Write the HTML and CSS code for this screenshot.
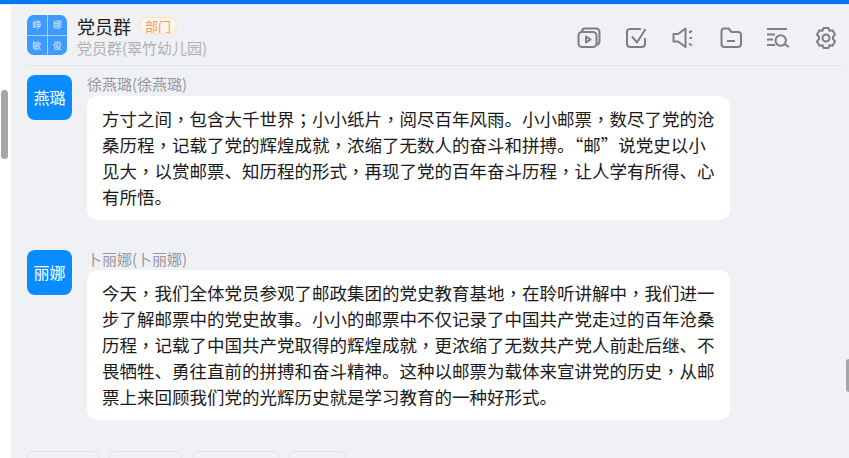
FILE: index.html
```html
<!DOCTYPE html>
<html lang="zh-CN">
<head>
    <meta charset="UTF-8">
    <title>党员群</title>
    <link rel="stylesheet" href="styles.css">
</head>
<body>

    <!-- Top Accent -->
    <div class="top-line"></div>

    <div class="page">

        <!-- Left Strip -->
        <div class="side-strip"><div class="thumb-left"></div></div>

        <!-- Chat Panel -->
        <div class="chat">
            <div class="thumb-right"></div>

            <header class="chat-head">
                <div class="group-logo">
                    <span>峥</span><span>娜</span><span>敏</span><span>俊</span>
                </div>
                <div class="group-info">
                    <div class="group-title">
                        <span class="group-name">党员群</span>
                        <span class="group-tag">部门</span>
                    </div>
                    <div class="group-sub">党员群(翠竹幼儿园)</div>
                </div>
                <div class="head-tools">
                    <svg class="tool" viewBox="0 0 24 24"><path d="M5 5.500C5 3.500 6 2.500 8 2.500H19A3.500 3.500 0 0 1 22.500 6V15A4 4 0 0 1 19.500 19"/><rect x="1.500" y="6" width="18" height="15" rx="3.500"/><path d="M9 10.500V16.500L13.500 13.500Z"/></svg>
                    <svg class="tool" viewBox="0 0 24 24"><path d="M17 3H6A3 3 0 0 0 3 6V18A3 3 0 0 0 6 21H18A3 3 0 0 0 21 18V12"/><path d="M8 10.500L13 16.500L21.500 3"/></svg>
                    <svg class="tool" viewBox="0 0 24 24"><path d="M2.500 8H7L14.500 2.500V21L7 15.500H2.500Z"/><path d="M18 6.500L21 5M18.500 12H21M18 17.500L21 19.500"/></svg>
                    <svg class="tool" viewBox="0 0 24 24"><path d="M2.500 5A2.500 2.500 0 0 1 5 2.500H9.500L12.500 6H19A3 3 0 0 1 22 9V18A3 3 0 0 1 19 21H5.500A3 3 0 0 1 2.500 18Z"/><path d="M8 15H16"/></svg>
                    <svg class="tool" viewBox="0 0 24 24"><path d="M1 3H21M1 8.500H9M1 13.500H7M1 19H9"/><circle cx="14.700" cy="14.500" r="5.200"/><path d="M18.500 18.200L23 21"/></svg>
                    <svg class="tool" viewBox="0 0 24 24"><path d="M9.500 2H14.500L15.500 4.800L18.500 4.200L21 8.500L19 10.800V13.200L21 15.500L18.500 19.800L15.500 19.200L14.500 22H9.500L8.500 19.200L5.500 19.800L3 15.500L5 13.200V10.800L3 8.500L5.500 4.200L8.500 4.800Z"/><circle cx="12" cy="12" r="3.500"/></svg>
                </div>
            </header>

            <!-- Messages -->
            <div class="msg first">
                <div class="avatar">燕璐</div>
                <div class="msg-body">
                    <div class="msg-name">徐燕璐(徐燕璐)</div>
                    <div class="bubble">方寸之间<i lang="zh-TW">，</i>包含大千世界<i lang="zh-TW">；</i>小小纸片<i lang="zh-TW">，</i>阅尽百年风雨。小小邮票<i lang="zh-TW">，</i>数尽了党的沧<br>桑历程<i lang="zh-TW">，</i>记载了党的辉煌成就<i lang="zh-TW">，</i>浓缩了无数人的奋斗和拼搏。“邮”说党史以小<br>见大<i lang="zh-TW">，</i>以赏邮票、知历程的形式<i lang="zh-TW">，</i>再现了党的百年奋斗历程<i lang="zh-TW">，</i>让人学有所得、心<br>有所悟。</div>
                </div>
            </div>

            <div class="msg">
                <div class="avatar">丽娜</div>
                <div class="msg-body">
                    <div class="msg-name">卜丽娜(卜丽娜)</div>
                    <div class="bubble">今天<i lang="zh-TW">，</i>我们全体党员参观了邮政集团的党史教育基地<i lang="zh-TW">，</i>在聆听讲解中<i lang="zh-TW">，</i>我们进一<br>步了解邮票中的党史故事。小小的邮票中不仅记录了中国共产党走过的百年沧桑<br>历程<i lang="zh-TW">，</i>记载了中国共产党取得的辉煌成就<i lang="zh-TW">，</i>更浓缩了无数共产党人前赴后继、不<br>畏牺牲、勇往直前的拼搏和奋斗精神。这种以邮票为载体来宣讲党的历史<i lang="zh-TW">，</i>从邮<br>票上来回顾我们党的光辉历史就是学习教育的一种好形式。</div>
                </div>
            </div>

            <!-- Bottom Actions -->
            <div class="actions">
                <div class="action a1"></div>
                <div class="action a2"></div>
                <div class="action a3"></div>
                <div class="action a4"></div>
            </div>
        </div>
    </div>
</body>
</html>
```

FILE: styles.css
```css
/* === Global Styles === */
html, body {
    margin: 0;
    height: 458px;
    overflow: hidden;
}

body {
    background: #fff;
    font-family: "Noto Sans CJK SC", "Liberation Sans", sans-serif;
    color: #1a1a1a;
}

.top-line {
    height: 4px;
    background: #0078f2;
    border-bottom: 1px solid #dfe3ea;
}

.page {
    display: flex;
    height: 453px;
}

/* === Left strip and scrollbars === */
.side-strip {
    width: 11px;
    position: relative;
    background: #fff;
}

.thumb-left {
    position: absolute;
    left: 1px;
    top: 85px;
    width: 7px;
    height: 69px;
    border-radius: 4px;
    background: #a6a6a6;
}

.thumb-right {
    position: absolute;
    right: 0;
    top: 354px;
    width: 3px;
    height: 33px;
    border-radius: 3px 0 0 3px;
    background: #a6a6a6;
}

/* === Chat panel === */
.chat {
    flex: 1;
    position: relative;
    background: #f0f1f4;
    padding: 0 6px 0 16px;
}

.chat-head {
    display: flex;
    align-items: center;
    height: 60px;
    border-bottom: 1px solid #e2e3e7;
}

.group-logo {
    width: 40px;
    height: 40px;
    display: grid;
    grid-template-columns: 1fr 1fr;
    gap: 1px;
    border-radius: 7px;
    overflow: hidden;
    background: #a9d0fb;
}

.group-logo span {
    display: flex;
    align-items: center;
    justify-content: center;
    background: #3d9bfd;
    color: #d6e9ff;
    font-size: 9px;
}

.group-info {
    margin-left: 10px;
    margin-top: 1px;
}

.group-title {
    display: flex;
    align-items: center;
    height: 24px;
}

.group-name {
    font-size: 18px;
    line-height: 24px;
    color: #222;
}

.group-tag {
    margin-left: 8px;
    padding: 0 5px;
    height: 15px;
    line-height: 15px;
    font-size: 13px;
    color: #fa9a5c;
    background: #fdf6ee;
    border: 1px solid #fce0c0;
    border-radius: 9px;
}

.group-sub {
    font-size: 15px;
    line-height: 20px;
    color: #b0b0b3;
}

.head-tools {
    margin-left: auto;
    margin-right: 5.5px;
    margin-top: 6px;
    display: flex;
    gap: 23.4px;
}

.tool {
    width: 24px;
    height: 24px;
    fill: none;
    stroke: #7f7f82;
    stroke-width: 2;
    stroke-linejoin: round;
}

/* === Messages === */
.msg {
    display: flex;
    margin-top: 30px;
}

.msg.first {
    margin-top: 9px;
}

.avatar {
    width: 45px;
    height: 45px;
    flex: none;
    border-radius: 8px;
    background: #0a8cff;
    color: #fff;
    font-size: 16px;
    line-height: 45px;
    text-align: center;
}

.msg-name {
    font-size: 15px;
    line-height: 18px;
    color: #97979a;
    margin-bottom: 2px;
}

.first .msg-name {
    margin-bottom: 3px;
}

.msg-body {
    margin-left: 15px;
    width: 643px;
}

.bubble {
    padding: 10px 14px 10px 15px;
    background: #fff;
    border-radius: 10px;
    font-size: 17.5px;
    line-height: 26px;
}

/* centered comma and semicolon, as in the original font */
.bubble i {
    font-style: normal;
    font-family: "Noto Sans CJK TC", sans-serif;
}

/* === Bottom buttons === */
.actions {
    display: flex;
    gap: 10.3px;
    margin-top: 31px;
}

.action {
    height: 20px;
    box-sizing: border-box;
    border: 1px solid #e2e3e7;
    border-radius: 5px;
}

.a1 { width: 72px; }
.a2 { width: 73px; }
.a3 { width: 86px; }
.a4 { width: 57px; }
```
